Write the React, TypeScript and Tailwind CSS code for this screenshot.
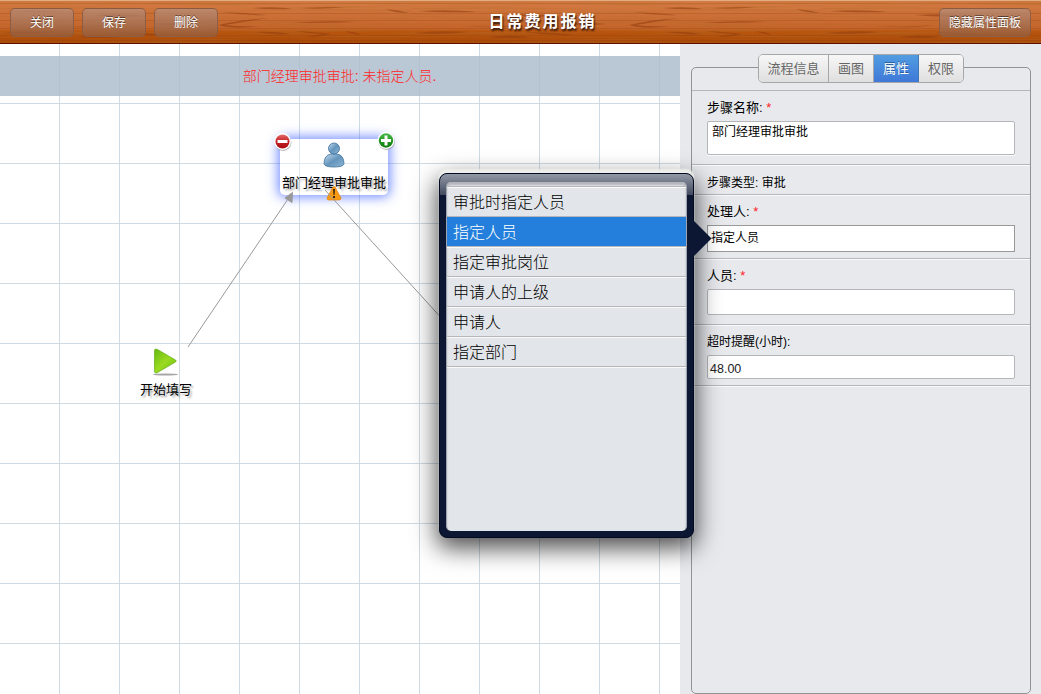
import { ReactNode } from "react";

const actions = ["关闭", "保存", "删除"];
const tabs = [
  { label: "流程信息", width: "w-[70px]" },
  { label: "画图", width: "w-[45px]" },
  { label: "属性", width: "w-[45px]", active: true },
  { label: "权限", width: "w-[44px]" },
];
const options = ["审批时指定人员", "指定人员", "指定审批岗位", "申请人的上级", "申请人", "指定部门"];

function WoodTexture() {
  return (
    <svg className="absolute inset-0" width="1041" height="44" aria-hidden="true">
      <defs>
        <linearGradient id="wood" x1="0" y1="0" x2="0" y2="1">
          <stop offset="0" stopColor="#d47c44" />
          <stop offset="0.45" stopColor="#ca6c33" />
          <stop offset="0.66" stopColor="#c46329" />
          <stop offset="0.7" stopColor="#b9560f" />
          <stop offset="1" stopColor="#a74806" />
        </linearGradient>
        <filter id="grain" x="0" y="0" width="100%" height="100%">
          <feTurbulence type="fractalNoise" baseFrequency="0.008 0.5" numOctaves="3" seed="8" />
          <feColorMatrix values="0 0 0 0 0.45  0 0 0 0 0.14  0 0 0 0 0.02  2.2 0 0 0 -0.9" />
        </filter>
        <pattern id="plank" width="411" height="44" patternUnits="userSpaceOnUse">
          <rect width="411" height="44" fill="url(#wood)" />
          <rect width="411" height="44" filter="url(#grain)" opacity="0.5" />
          <path d="M0 3.500h411M0 13.500h411M0 20.500h411M0 28.500h411M0 35.500h411M0 40.500h411" stroke="#8a3808" strokeOpacity="0.22" />
          <g fill="#8f3b0d" fillOpacity="0.55">
            <path d="M222 12q24 1 45 3-22 1-45-3ZM252 8q26-2 40 1-22 1-40-1Z" />
            <path d="M218 25q20-5 50-7-25 4-43 7 16 2 35 1-26 4-42-1Z" />
            <path d="M300 8q24-1 45-1-24 3-45 1ZM385 9q14 1 24 4-14 0-24-4Z" />
            <path d="M255 32q20-1 36 2l-30 2 20-2q-14 0-26-2Z" />
            <path d="M295 31q22 1 36 3-10 3-26 3 12-2 19-3-14 0-29-3ZM345 31q12 1 16 4-10-1-16-4Z" />
            <path d="M292 23q34-3 64-1-34 1-64 1ZM2 33q28-3 56-1-25 3-56 1Z" />
            <path d="M52 26q32 2 60-1-24 4-60 1ZM92 15q28-2 57 1-30 2-57-1Z" />
            <path d="M113 32q28 0 51 3-25 1-51-3ZM158 24q20-2 38 0-18 2-38 0Z" />
            <path d="M76 37q23-3 45 0-24 2-45 0ZM7 11q34-2 59 1-35 1-59-1Z" />
          </g>
        </pattern>
      </defs>
      <rect width="1041" height="44" fill="url(#plank)" />
      <rect width="1041" height="1" fill="#e3ad84" />
      <rect y="43" width="1041" height="1" fill="#5c1000" />
    </svg>
  );
}

function BarButton({ children, className }: { children: ReactNode; className: string }) {
  return (
    <button
      className={`${className} flex h-[29px] items-center justify-center rounded-[5px] border border-[#8b5a40]/90 bg-gradient-to-b from-[#b88c77]/80 to-[#965d3b]/80 pt-px text-[12px] leading-none text-white [text-shadow:0_-1px_0_rgba(0,0,0,0.5)]`}
    >
      {children}
    </button>
  );
}

function Row({ children, className }: { children?: ReactNode; className: string }) {
  return <div className={`${className} border-b border-[#b5b6ba] px-[15px] shadow-[0_1px_0_#fafafc]`}>{children}</div>;
}

function Label({ children, required }: { children: ReactNode; required?: boolean }) {
  return (
    <div className="h-[18px] whitespace-pre text-[13px] leading-[18px]">
      {children}
      {required && <span className="text-[#f22]"> *</span>}
    </div>
  );
}

function Connectors() {
  return (
    <svg className="absolute left-0 top-0" width="680" height="650" stroke="#999" fill="none">
      <path d="M188 303L288 155M325 146L465 300" />
      <path d="M292.500 148.500L285 154L292 158.500Z" fill="#999" />
    </svg>
  );
}

function Canvas() {
  return (
    <main className="relative h-full w-[680px] overflow-hidden bg-white bg-[linear-gradient(to_right,transparent_59px,#cedbe4_59px),linear-gradient(to_bottom,transparent_59px,#cedbe4_59px)] bg-[size:60px_60px]">
      <div className="mt-3 flex h-10 items-center justify-center bg-[#a9bacb]/80 pr-px pt-px text-[14px] font-light text-[#ff2424]">
        部门经理审批审批: 未指定人员.
      </div>

      <div className="absolute left-[280px] top-[95px] flex h-[56px] w-[108px] flex-col items-center rounded-[5px] bg-white/40 shadow-[0_0_12px_2px_rgba(55,92,255,0.7)]">
        <svg className="mt-[3px]" width="22" height="26" viewBox="0 0 22 26">
          <defs>
            <linearGradient id="person" x1="0" y1="0" x2="1" y2="1">
              <stop offset="0" stopColor="#c5dcee" />
              <stop offset="0.5" stopColor="#6595bd" />
              <stop offset="1" stopColor="#8db6d5" />
            </linearGradient>
          </defs>
          <path d="M1 22Q1 13 8 12h6q7 1 7 10-1 3-10 3T1 22Z" fill="url(#person)" stroke="#43759d" strokeWidth="0.8" />
          <circle cx="11" cy="6.500" r="5.500" fill="url(#person)" stroke="#3c6d99" strokeWidth="0.8" />
        </svg>
        <span className="mt-[6px] whitespace-nowrap text-[13px] leading-[18px] [text-shadow:2px_2px_2px_rgba(0,0,0,0.35)]">部门经理审批审批</span>
      </div>

      <svg className="absolute left-[272px] top-[87px]" width="124" height="20">
        <defs>
          <linearGradient id="red" x1="0" y1="0" x2="0" y2="1">
            <stop stopColor="#e36b6b" /><stop offset="0.5" stopColor="#c51f24" /><stop offset="1" stopColor="#a90d12" />
          </linearGradient>
          <linearGradient id="green" x1="0" y1="0" x2="0" y2="1">
            <stop stopColor="#48b848" /><stop offset="1" stopColor="#087b08" />
          </linearGradient>
        </defs>
        <circle cx="11" cy="11.500" r="8.500" fill="#888" opacity="0.6" />
        <circle cx="10.500" cy="10.500" r="8.500" fill="#fff" />
        <circle cx="10.500" cy="10.500" r="7" fill="url(#red)" />
        <rect x="5.500" y="9" width="10" height="3" fill="#fff" />
        <circle cx="114.500" cy="10.500" r="8.500" fill="#888" opacity="0.6" />
        <circle cx="114" cy="9.500" r="8.500" fill="#fff" />
        <circle cx="114" cy="9.500" r="7.200" fill="url(#green)" />
        <path d="M112.500 4.500h3v3.500h3.500v3h-3.500v3.500h-3v-3.500H109V8h3.500Z" fill="#fff" />
      </svg>

      <svg className="absolute left-[326px] top-[141px]" width="16" height="16">
        <path d="M7 2q1-1 2 0l6 11q0 2-2 2H3q-2 0-2-2Z" fill="#f79a16" stroke="#e48405" strokeWidth="0.7" />
        <path d="M7 4h2l-.5 6h-1ZM7 11h2v2H7Z" fill="#3a2410" />
      </svg>

      <Connectors />

      <div className="absolute left-[136px] top-[303px] flex w-[60px] flex-col items-center">
        <svg width="28" height="30">
          <defs>
            <linearGradient id="play" x1="0" y1="0" x2="1" y2="1">
              <stop stopColor="#65b911" /><stop offset="0.5" stopColor="#9bda20" /><stop offset="1" stopColor="#6fbd13" />
            </linearGradient>
          </defs>
          <ellipse cx="13.500" cy="27.500" rx="12.500" ry="1" fill="#777" opacity="0.65" />
          <path d="M2.500 4q0-3 3-1.500l18 10.500q1.500 1 0 2l-18 10.500q-3 1.500-3-1.500Z" fill="url(#play)" stroke="#62ad12" strokeWidth="0.7" />
        </svg>
        <span className="mt-[4px] text-[13px] leading-[18px] [text-shadow:2px_2px_2px_rgba(0,0,0,0.35)]">开始填写</span>
      </div>
    </main>
  );
}

function Properties() {
  return (
    <aside className="flex-1 bg-[#e7e9ed] pl-[11px] pr-[10px] pt-[23px]">
      <section className="h-[627px] rounded-[5px] border border-[#929397]">
        <div className="h-[23px] border-b border-[#b5b6ba]">
          <nav className="relative -top-[14px] mx-auto flex h-[29px] w-[206px] overflow-hidden rounded-[5px] border border-[#a6a7a9] text-[13px] text-[#666]">
            {tabs.map((tab) => (
              <button
                key={tab.label}
                className={`${tab.width} shrink-0 border-r last:border-r-0 ${tab.active ? "border-[#4577b5] bg-gradient-to-b from-[#529ce1] to-[#3f78d8] text-white [text-shadow:0_-1px_0_#275a9b]" : "border-[#a6a7a9] bg-gradient-to-b from-[#f7f7f7] to-[#dfdfdf]"}`}
              >
                {tab.label}
              </button>
            ))}
          </nav>
        </div>
        <Row className="h-[74px] pt-[8px]">
          <Label required>步骤名称:</Label>
          <div className="mt-[4px] h-[34px] rounded-[2px] border border-[#b5b6ba] bg-white px-[4px] pt-px text-[12px] leading-[18px] shadow-[0_1px_0_#fafafc]">部门经理审批审批</div>
        </Row>
        <Row className="h-[30px] pt-[9px]">
          <Label><span className="text-[12px]">步骤类型: 审批</span></Label>
        </Row>
        <Row className="h-[64px] pt-[8px]">
          <Label required>处理人:</Label>
          <div className="mt-[4px] h-[27px] border border-[#999] bg-white px-[3px] text-[12px] leading-[25px]">指定人员</div>
        </Row>
        <Row className="h-[66px] pt-[8px]">
          <Label required>人员:</Label>
          <div className="mt-[4px] h-[26px] rounded-[2px] border border-[#b5b6ba] bg-white" />
        </Row>
        <Row className="h-[61px] pt-[8px]">
          <Label><span className="text-[12px]">超时提醒(小时):</span></Label>
          <div className="mt-[4px] h-[24px] rounded-[2px] border border-[#b5b6ba] bg-white px-[2px] text-[12.500px] leading-[26px] text-[#222]">48.00</div>
        </Row>
      </section>
    </aside>
  );
}

function PickerPopup() {
  return (
    <div className="absolute left-[439px] top-[173px] z-10 h-[365px] w-[255px] rounded-[8px] border border-[#020b20] bg-[#0b1733] bg-[linear-gradient(to_bottom,#9298a5,#414a60_21px,#0b1733_21px)] px-[6px] pt-[8px] shadow-[0_-4px_2px_rgba(238,238,236,0.95),0_8px_25px_2px_rgba(0,0,0,0.7)]">
      <svg className="absolute left-[253px] top-[46px]" width="19" height="38">
        <path d="M0 0L18.500 18.500L0 37Z" fill="#0b1733" />
      </svg>
      <div className="h-[349px] overflow-hidden rounded-[5px] border-x border-[#9fa4ae] bg-[#e2e5e9] pt-[4px] shadow-[inset_0_3px_2px_#b2b5bb]">
        <div className="h-px bg-[#b5b6ba]" />
        {options.map((option) => (
          <div
            key={option}
            className={`h-[30px] border-b border-t border-b-[#b5b6ba] px-[6px] text-[16px] font-light leading-[30px] ${option === "指定人员" ? "border-t-[#237fdb] bg-[#237fdb] text-white" : "border-t-[#fafafa]"}`}
          >
            {option}
          </div>
        ))}
        <div className="h-px bg-[#fafafa]" />
      </div>
    </div>
  );
}

export default function App() {
  return (
    <div className="relative flex h-[694px] w-[1041px] flex-col overflow-hidden bg-white font-['Liberation_Sans','Noto_Sans_CJK_SC',sans-serif] text-black">
      <header className="relative h-[44px] shrink-0">
        <WoodTexture />
        <div className="relative grid h-full grid-cols-[208px_1fr_208px] items-center px-[10px]">
          <div className="flex gap-2">
            {actions.map((action) => <BarButton key={action} className="w-[64px]">{action}</BarButton>)}
          </div>
          <h1 className="pl-[44px] text-center text-[16px] font-bold tracking-[2px] text-white [text-shadow:1px_2px_2px_#291006]">日常费用报销</h1>
          <BarButton className="w-[92px] justify-self-end">隐藏属性面板</BarButton>
        </div>
      </header>
      <div className="flex min-h-0 flex-1">
        <Canvas />
        <Properties />
      </div>
      <PickerPopup />
    </div>
  );
}
